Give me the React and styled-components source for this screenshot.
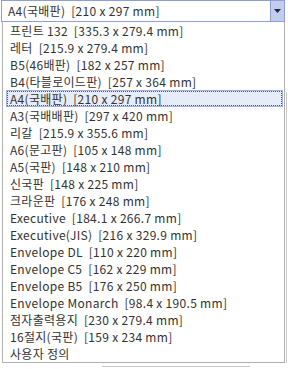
import React from 'react';
import styled, { createGlobalStyle } from 'styled-components';

const GlobalStyle = createGlobalStyle`
  html, body {
    margin: 0;
    padding: 0;
    background: #ffffff;
  }
  body {
    font-family: "Noto Sans CJK KR", "Noto Sans", sans-serif;
  }
`;

const Page = styled.div`
  width: 288px;
  height: 369px;
  overflow: hidden;
  display: flex;
  flex-direction: column;
  background: #fff;
`;

const Combo = styled.div`
  margin-left: 1px;
  width: 284px;
  height: 22px;
  box-sizing: border-box;
  border: 1px solid #8e9fd6;
  display: flex;
  align-items: stretch;
  background: #fff;
`;

const ComboText = styled.div`
  flex: 1;
  padding-left: 6px;
  font-size: 12px;
  letter-spacing: 0.3px;
  line-height: 20px;
  color: #333;
  white-space: pre;
`;

const ComboButton = styled.div`
  width: 13px;
  background: #c4cceb;
  border-left: 1px solid #8e9fd6;
  display: flex;
  align-items: center;
  justify-content: center;
`;

const Body = styled.div`
  display: flex;
  flex: none;
`;

const List = styled.ul`
  list-style: none;
  margin: 0 0 0 2px;
  padding: 0;
  width: 283px;
  box-sizing: border-box;
  border: 1px solid #b0b0b0;
  border-top: none;
  background: #fff;
`;

const Item = styled.li`
  height: 17px;
  box-sizing: border-box;
  padding-left: 7px;
  font-size: 12px;
  letter-spacing: 0.3px;
  line-height: 17px;
  color: #333;
  white-space: pre;
  margin: 0 1px 0 0;

  ${p => p.$selected && `
    margin: 0 1px 0 3px;
    padding-left: 3px;
    background: #e7ecf9;
    border: 1px solid #9fb2e6;
    line-height: 15px;
    outline: 1px dotted #555;
    outline-offset: -2px;
  `}
`;

const SideStrip = styled.div`
  flex: 1;
  padding-top: 70px;
  display: flex;
  flex-direction: column;
  align-items: flex-start;
`;

const SideLine = styled.div`
  width: 1px;
  margin-left: 1px;
  flex: 1;
  background: #c8c8c8;
`;

const Footer = styled.div`
  flex: 1;
  display: flex;
  align-items: flex-end;
  padding-bottom: 2px;
  box-sizing: border-box;
`;

const FooterLine = styled.div`
  margin-left: 102px;
  width: 148px;
  height: 1px;
  background: #c8c8c8;
`;

const sizes = [
  '프린트 132  [335.3 x 279.4 mm]',
  '레터  [215.9 x 279.4 mm]',
  'B5(46배판)  [182 x 257 mm]',
  'B4(타블로이드판)  [257 x 364 mm]',
  'A4(국배판)  [210 x 297 mm]',
  'A3(국배배판)  [297 x 420 mm]',
  '리갈  [215.9 x 355.6 mm]',
  'A6(문고판)  [105 x 148 mm]',
  'A5(국판)  [148 x 210 mm]',
  '신국판  [148 x 225 mm]',
  '크라운판  [176 x 248 mm]',
  'Executive  [184.1 x 266.7 mm]',
  'Executive(JIS)  [216 x 329.9 mm]',
  'Envelope DL  [110 x 220 mm]',
  'Envelope C5  [162 x 229 mm]',
  'Envelope B5  [176 x 250 mm]',
  'Envelope Monarch  [98.4 x 190.5 mm]',
  '점자출력용지  [230 x 279.4 mm]',
  '16절지(국판)  [159 x 234 mm]',
  '사용자 정의',
];

export default function App() {
  const selected = 4;
  return (
    <Page>
      <GlobalStyle />
      <Combo>
        <ComboText>{sizes[selected]}</ComboText>
        <ComboButton>
          <svg width="7" height="4" viewBox="0 0 7 4">
            <path d="M0 0h7L3.5 4z" fill="#1d2a4a" />
          </svg>
        </ComboButton>
      </Combo>
      <Body>
        <List>
          {sizes.map((s, i) => (
            <Item key={s} $selected={i === selected}>{s}</Item>
          ))}
        </List>
        <SideStrip>
          <SideLine />
        </SideStrip>
      </Body>
      <Footer>
        <FooterLine />
      </Footer>
    </Page>
  );
}
